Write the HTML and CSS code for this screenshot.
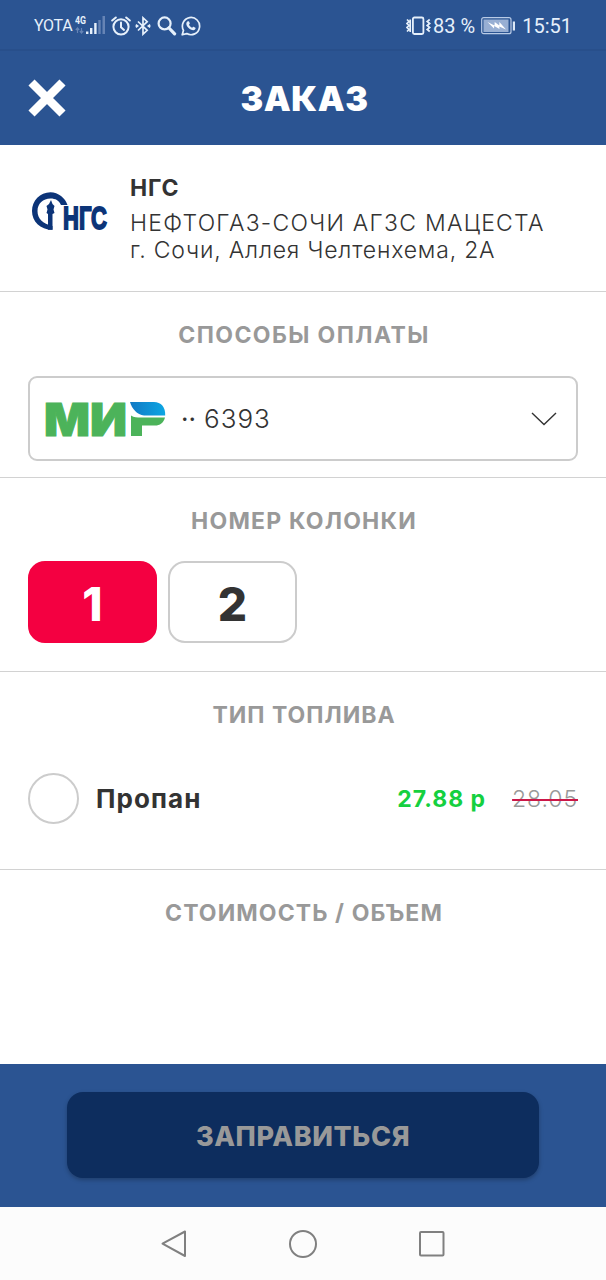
FILE: index.html
```html
<!DOCTYPE html>
<html lang="ru">
<head>
    <meta charset="UTF-8">
    <meta name="viewport" content="width=device-width, initial-scale=1.0">
    <title>Заказ</title>
    <link rel="stylesheet" href="styles.css">
</head>
<body>
    <div class="screen">
        <!-- Status bar -->
        <div class="status-bar">
            <div class="status-left">
                <span class="carrier">YOTA</span>
                <svg class="signal" width="30" height="20" viewBox="0 0 30 20">
                    <text class="network" x="0" y="8" textLength="11" lengthAdjust="spacingAndGlyphs">4G</text>
                    <path d="M2.5 12v5M.8 14l1.7-2 1.7 2M6.5 12v5M4.8 15l1.7 2 1.7-2" fill="none" stroke="#6684b5" stroke-width="1.2"/>
                    <path d="M11 15.500h2.400V18H11zM15 12h2.400v6H15zM19.200 7h2.400v11h-2.400z" fill="#e6f0fb"/>
                    <path d="M23.300 4h2.400v14h-2.400zM27.500 0H30v18h-2.500z" fill="#6684b5"/>
                </svg>
                <svg class="alarm" width="20" height="20" viewBox="0 0 20 20" fill="none" stroke="#e6f0fb" stroke-width="2" stroke-linecap="round">
                    <circle cx="10" cy="10.8" r="7.6"/>
                    <path d="M10 6.500v4.800l3 2.600M1.200 4.500l3.600-3M18.800 4.500l-3.600-3"/>
                </svg>
                <svg class="bluetooth" width="16" height="20" viewBox="0 0 16 20" fill="none" stroke="#e6f0fb" stroke-width="1.7">
                    <path d="M3 5.500l9.200 8.800L8 18.200V1.800l4.200 3.900L3 14.500"/>
                    <path d="M.8 8.700L2.600 10 .8 11.300M15.200 8.700L13.400 10l1.800 1.300"/>
                </svg>
                <svg class="search" width="20" height="20" viewBox="0 0 20 20" fill="none" stroke="#e6f0fb">
                    <circle cx="7.600" cy="7.400" r="6" stroke-width="2.200"/>
                    <path d="M12 12l5.600 5.800" stroke-width="3.200" stroke-linecap="round"/>
                </svg>
                <svg class="whatsapp" width="20" height="20" viewBox="0 0 20 20">
                    <path d="M1.200 18.800l1.300-4.500A8.600 8.600 0 1 1 5.800 17.600z" fill="none" stroke="#e6f0fb" stroke-width="1.700" stroke-linejoin="round"/>
                    <path d="M6.400 5.600c.6-.6 1.300-.5 1.600 0l.8 1.700c.1.5-.5 1-.8 1.400.7 1.400 1.700 2.300 3.200 3 .4-.4.9-1.100 1.300-1l1.900 1c.4.3.1 1.300-.4 1.800-1 .9-2.500.8-4.300-.1-1.800-.9-3.200-2.400-4-4-.7-1.500-.4-2.800.7-3.800z" fill="#e6f0fb"/>
                </svg>
            </div>
            <div class="status-right">
                <svg class="vibrate" width="25" height="20" viewBox="0 0 25 20" fill="none" stroke="#e6f0fb">
                    <rect x="6.900" y="1.500" width="10.500" height="16.500" rx="1.500" stroke-width="1.800"/>
                    <path d="M1 3.500l2 2-2 2 2 2-2 2 2 2-2 2M4.200 3.500v12.500M23.700 3.500l-2.500 2 2.500 2-2.500 2 2.500 2-2.500 2 2.500 2" stroke-width="1.700"/>
                </svg>
                <span class="percent">83 %</span>
                <svg class="battery" width="35" height="18" viewBox="0 0 35 18">
                    <rect x=".7" y=".7" width="29.300" height="16" rx="2" fill="none" stroke="#b9cbe6" stroke-width="1.200"/>
                    <rect x="2.500" y="2.500" width="25" height="12.500" fill="#98afd3"/>
                    <path d="M6.500 5l7 3.500.2-3.500 4.600 3.500.1-3.500L25 12.500l-6.700-3 .2 2.500-5.300-3-.2 2.500z" fill="#fff"/>
                    <path d="M31.800 4.500H34v9h-2.200z" fill="#dce8f7"/>
                </svg>
                <span class="time">15:51</span>
            </div>
        </div>

        <!-- Title -->
        <header class="header">
            <svg class="close" width="38" height="38" viewBox="0 0 38 38">
                <path d="M3.500 3.500l31 31M34.500 3.500l-31 31" stroke="#fff" stroke-width="8.600"/>
            </svg>
            <h1>ЗАКАЗ</h1>
        </header>

        <!-- Gas station -->
        <section class="station">
            <svg class="station-logo" width="82" height="60" viewBox="0 -8 82 60">
                <path class="logo-ring" d="M36.500 14A18.500 18.500 0 0 0 19.500 1.200C9 1.200 1 9.500 1 20s8 18.800 20.500 18.800V35C11.500 33 6.500 27.500 6.500 20S12 7.500 19.500 7.500c5 0 8.500 2 10.500 6.500z"/>
                <path class="logo-tower" d="M20 9l1.500 4 2 2-1 3.500 1 3.500-2 1v15.800h-4.500V23l-1.500-1 1-3.500-1-3.500 2.500-2z"/>
                <text class="logo-text" x="32" y="37.500" textLength="44" lengthAdjust="spacingAndGlyphs">НГС</text>
            </svg>
            <div class="station-info">
                <h2>НГС</h2>
                <p class="station-name">НЕФТОГАЗ-СОЧИ АГЗС МАЦЕСТА</p>
                <p class="station-address">г. Сочи, Аллея Челтенхема, 2А</p>
            </div>
        </section>

        <!-- Payment method -->
        <section class="payment">
            <h3 class="title-payment">СПОСОБЫ ОПЛАТЫ</h3>
            <div class="card-select">
                <svg class="mir" width="121" height="60" viewBox="0 -12 121 60">
                    <defs>
                        <linearGradient id="mir-blue">
                            <stop offset="0" stop-color="#1279c4"/>
                            <stop offset="1" stop-color="#0ca6e3"/>
                        </linearGradient>
                    </defs>
                    <text class="mir-text" x="-1" y="34.500" textLength="83" lengthAdjust="spacingAndGlyphs">МИ</text>
                    <path d="M86 14.500c3 2 6 2 10 2h24c-1.500 5.500-5 8-10 8H97V35H86z" fill="#4cb35a"/>
                    <path d="M85 1h24c7 0 11.500 5 11.200 13.500H99C92 13.500 87 8 85 1z" fill="url(#mir-blue)"/>
                </svg>
                <span class="dots">··</span>
                <span class="card-number">6393</span>
                <svg class="chevron" width="26" height="14" viewBox="0 0 26 14">
                    <path d="M1 1l12 11.500L25 1" fill="none" stroke="#333" stroke-width="1.400"/>
                </svg>
            </div>
        </section>

        <!-- Pump number -->
        <section class="pump">
            <h3 class="title-pump">НОМЕР КОЛОНКИ</h3>
            <div class="pump-list">
                <button class="pump-btn active">1</button>
                <button class="pump-btn">2</button>
            </div>
        </section>

        <!-- Fuel type -->
        <section class="fuel">
            <h3 class="title-fuel">ТИП ТОПЛИВА</h3>
            <div class="fuel-row">
                <span class="radio"></span>
                <span class="fuel-name">Пропан</span>
                <span class="price">27.88 р</span>
                <span class="old-price">28.05</span>
            </div>
        </section>

        <section class="cost">
            <h3 class="title-cost">СТОИМОСТЬ / ОБЪЕМ</h3>
        </section>

        <footer class="footer">
            <button class="submit-btn">ЗАПРАВИТЬСЯ</button>
        </footer>

        <!-- System navigation -->
        <nav class="nav-bar">
            <svg width="28" height="30" viewBox="0 0 28 30"><path d="M25 2.500v24.500L2.500 14.700z"/></svg>
            <svg width="30" height="30" viewBox="0 0 30 30"><circle cx="15" cy="15" r="13"/></svg>
            <svg width="28" height="30" viewBox="0 0 28 30"><rect x="2" y="3" width="23.500" height="23.500" rx="1"/></svg>
        </nav>
    </div>
</body>
</html>
```

FILE: styles.css
```css
* {
    margin: 0;
    padding: 0;
    box-sizing: border-box;
}

body {
    font-family: Inter, "Noto Sans", sans-serif;
    background: #fff;
    color: #333;
}

.screen {
    width: 606px;
    height: 1280px;
    display: flex;
    flex-direction: column;
    overflow: hidden;
}

svg {
    flex-shrink: 0;
    display: block;
}

/* Status bar */
.status-bar {
    height: 51px;
    padding: 2px 34px 0;
    display: flex;
    justify-content: space-between;
    align-items: center;
    background: #2b5492;
    border-bottom: 2px solid #284f8b;
    color: #e6f0fb;
    font-family: Roboto, sans-serif;
}

.status-left,
.status-right {
    display: flex;
    align-items: center;
}

.carrier {
    width: 38px;
    font-size: 16px;
    letter-spacing: -0.3px;
}

.signal {
    margin-left: 3px;
}

.network {
    font: bold 10px Roboto, sans-serif;
    fill: #e6f0fb;
}

.alarm {
    margin-left: 6px;
}

.bluetooth {
    margin-left: 4px;
}

.search {
    margin-left: 6px;
}

.whatsapp {
    margin-left: 4px;
}

.percent,
.time {
    font-size: 20px;
    white-space: nowrap;
}

.percent {
    margin-left: 2px;
}

.battery {
    margin: 0 6px 0 6px;
}

/* Header */
.header {
    height: 94px;
    padding: 0 28px;
    display: grid;
    grid-template-columns: 38px 1fr 38px;
    align-items: center;
    background: #2b5492;
}

.header h1 {
    padding-left: 3px;
    text-align: center;
    color: #fff;
    font-size: 34px;
    font-weight: 900;
    letter-spacing: 0.5px;
}

/* Sections */
section {
    border-bottom: 1px solid #d2d2d2;
}

h3 {
    padding-left: 2px;
    text-align: center;
    color: #999;
    font-size: 23px;
    font-weight: 700;
    line-height: 28px;
    letter-spacing: 1px;
}

.title-payment {
    letter-spacing: 1.4px;
}

.title-pump {
    letter-spacing: 1.2px;
}

.station {
    height: 147px;
    padding: 28px 28px 0 31px;
    display: flex;
}

.station-logo {
    margin-top: 10px;
}

.logo-ring,
.logo-tower {
    fill: #0c3478;
}

.logo-text {
    font: 900 32px "Liberation Sans", sans-serif;
    fill: #0c3478;
    stroke: #0c3478;
    stroke-width: 1.8;
}

.station-info {
    margin-left: 17px;
    white-space: nowrap;
}

.station-info h2 {
    font-size: 23px;
    font-weight: 700;
    line-height: 30px;
    letter-spacing: 0.8px;
}

.station-name,
.station-address {
    font-size: 23px;
    font-weight: 350;
    line-height: 27px;
}

.station-name {
    margin-top: 7px;
    letter-spacing: 1.25px;
}

.station-address {
    letter-spacing: 0.8px;
}

.payment {
    height: 186px;
    padding: 29px 28px 0;
}

.card-select {
    height: 85px;
    margin-top: 27px;
    padding: 0 19px 0 15px;
    display: flex;
    align-items: center;
    border: 2px solid #ccc;
    border-radius: 9px;
}

.mir-text {
    font: 900 46px Inter, sans-serif;
    fill: #4cb35a;
    stroke: #4cb35a;
    stroke-width: 1;
}

.dots {
    margin-left: 15px;
    font-size: 26px;
}

.card-number {
    margin-left: 8px;
    font-size: 26px;
    font-weight: 350;
    letter-spacing: 1px;
}

.chevron {
    margin-left: auto;
}

.pump {
    height: 194px;
    padding: 29px 28px 0;
}

.pump-list {
    display: flex;
    gap: 11px;
    margin-top: 26px;
}

.pump-btn {
    width: 129px;
    height: 82px;
    padding-top: 3px;
    border: 2px solid #ccc;
    border-radius: 17px;
    background: #fff;
    color: #333;
    font-family: inherit;
    font-size: 46px;
    font-weight: 800;
}

.pump-btn.active {
    border-color: #f40041;
    background: #f40041;
    color: #fff;
}

.fuel {
    height: 198px;
    padding: 29px 28px 0;
}

.fuel-row {
    display: flex;
    align-items: center;
    margin-top: 44px;
}

.radio {
    width: 51px;
    height: 51px;
    border: 2px solid #ccc;
    border-radius: 50%;
}

.fuel-name {
    margin-left: 17px;
    font-size: 26px;
    font-weight: 700;
    letter-spacing: 1.1px;
}

.price {
    margin-left: auto;
    color: #15d03f;
    font-size: 23px;
    font-weight: 700;
    letter-spacing: 1px;
}

.old-price {
    margin-left: 26px;
    color: #999;
    font-size: 23px;
    font-weight: 300;
    letter-spacing: 0.9px;
    text-decoration: line-through #cc1748 1.5px;
}

.cost {
    height: 194px;
    padding: 29px 28px 0;
    border-bottom: none;
}

.title-cost {
    letter-spacing: 1.1px;
}

/* Footer */
.footer {
    height: 143px;
    padding: 28px 67px;
    background: #2b5492;
}

.submit-btn {
    width: 100%;
    height: 86px;
    padding-top: 2px;
    border: none;
    border-radius: 16px;
    background: #0d2d5e;
    box-shadow: 0 2px 4px rgba(0, 0, 0, 0.25);
    color: #999;
    font-family: inherit;
    font-size: 27px;
    font-weight: 800;
    letter-spacing: 0.6px;
}

.nav-bar {
    height: 73px;
    display: flex;
    justify-content: center;
    align-items: center;
    gap: 100px;
    background: #fcfcfc;
}

.nav-bar svg {
    fill: none;
    stroke: #808080;
    stroke-width: 2;
    stroke-linejoin: round;
}
```
